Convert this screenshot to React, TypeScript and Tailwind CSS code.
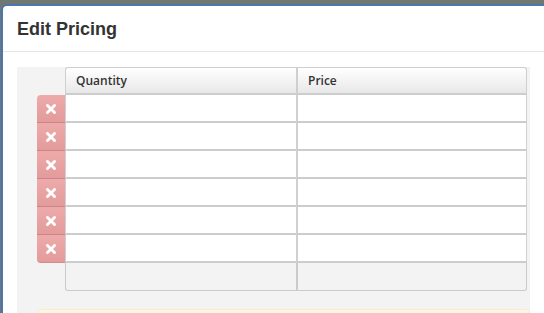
import React from "react";

const rows = [0, 1, 2, 3, 4, 5];

function XIcon() {
  return (
    <svg width="10" height="10" viewBox="0 0 10 10" className="block">
      <path d="M1.5 1.5 L8.5 8.5 M8.5 1.5 L1.5 8.5" stroke="white" strokeWidth="2.8" strokeLinecap="square" />
    </svg>
  );
}

export default function App() {
  return (
    <div className="w-[544px] h-[313px] overflow-hidden bg-[#6f786f] pt-[4px] pl-px" style={{ fontFamily: '"Liberation Sans", Arial, sans-serif' }}>
      <div className="h-full bg-white border-l-2 border-t-2 border-[#4b76b3] rounded-tl-[6px]">
        {/* header */}
        <div className="h-[46px] border-b border-[#e5e5e5] pl-[14px] flex items-center">
          <h3 className="text-[18px] font-bold text-[#333] leading-none">Edit Pricing</h3>
        </div>

        {/* body */}
        <div className="pt-[15px] pl-[14px]">
          <div className="w-[513px] h-[260px] bg-[#f3f3f3] pl-[20px]">
            <div className="grid grid-cols-[28px_231px_231px]" style={{ fontFamily: '"Open Sans", Arial, sans-serif' }}>
              {/* header row */}
              <div />
              <div className="h-[28px] bg-gradient-to-b from-white to-[#e8e8e8] border-t border-l border-[#cfcfcf] border-b-2 border-b-[#cdcdcd] rounded-tl-[3px] pl-[10px] flex items-center text-[12px] font-semibold text-[#333]">
                Quantity
              </div>
              <div className="h-[28px] bg-gradient-to-b from-white to-[#e8e8e8] border-t border-l-2 border-r border-[#cfcfcf] border-b-2 border-b-[#cdcdcd] rounded-tr-[3px] pl-[10px] flex items-center text-[12px] font-semibold text-[#333]">
                Price
              </div>

              {rows.map((r) => (
                <React.Fragment key={r}>
                  <button
                    className={`h-[28px] bg-gradient-to-b from-[#eeaaaa] to-[#e39b9b] border-b border-[#c98585] flex items-center justify-center ${
                      r === 0 ? "rounded-tl-[4px]" : ""
                    } ${r === rows.length - 1 ? "rounded-bl-[4px] border-b-[#d08c8c]" : ""}`}
                  >
                    <XIcon />
                  </button>
                  <div className="h-[28px] bg-white border-l border-[#d0d0d0] border-b-2 border-b-[#cdcdcd]" />
                  <div className="h-[28px] bg-white border-l-2 border-r border-[#d0d0d0] border-b-2 border-b-[#cdcdcd]" />
                </React.Fragment>
              ))}

              {/* footer row */}
              <div />
              <div className="h-[28px] bg-[#f3f3f3] border-l border-b border-[#cbcbcb] rounded-bl-[3px]" />
              <div className="h-[28px] bg-[#f3f3f3] border-l-2 border-r border-b border-[#cbcbcb] rounded-br-[3px]" />
            </div>

            <div className="mt-[18px] h-[20px] bg-[#fcf8e3] border border-[#faebcc] rounded-[4px]" />
          </div>
        </div>
      </div>
    </div>
  );
}
